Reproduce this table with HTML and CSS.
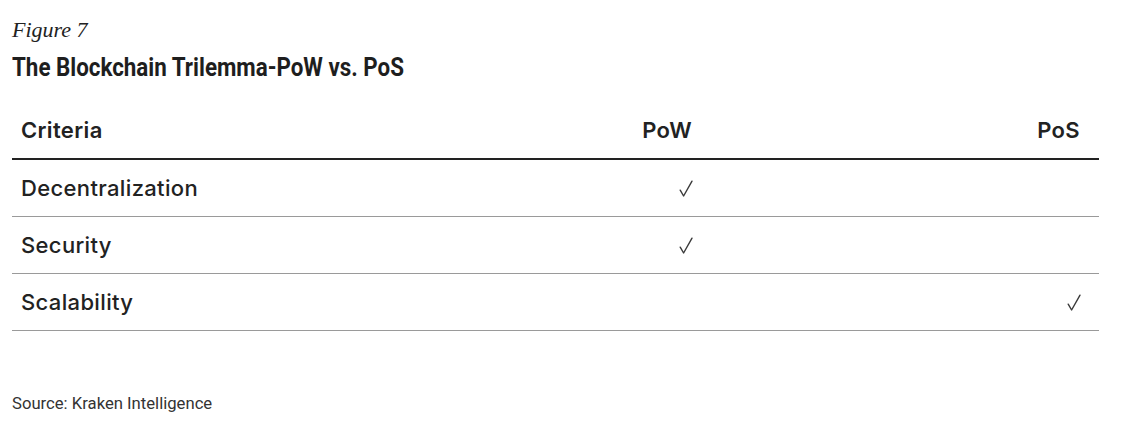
FILE: index.html
```html
<!DOCTYPE html>
<html>
<head>
<meta charset="utf-8">
<link rel="stylesheet" href="styles.css">
</head>
<body>
<div class="figure">
  <div class="fig-label">Figure 7</div>
  <h1 class="fig-title"><span class="cond">The Blockchain Trilemma-PoW vs. PoS</span></h1>
  <table class="trilemma">
    <colgroup>
      <col class="c-crit">
      <col class="c-pow">
      <col class="c-pos">
    </colgroup>
    <thead>
      <tr><th class="left">Criteria</th><th>PoW</th><th>PoS</th></tr>
    </thead>
    <tbody>
      <tr><td class="left">Decentralization</td><td class="chk"><svg class="tick" viewBox="0 0 14 17" width="14" height="17" aria-label="✓"><path d="M1.2 10.2 L4.6 16 L13 1.2"/></svg></td><td class="chk"></td></tr>
      <tr><td class="left">Security</td><td class="chk"><svg class="tick" viewBox="0 0 14 17" width="14" height="17" aria-label="✓"><path d="M1.2 10.2 L4.6 16 L13 1.2"/></svg></td><td class="chk"></td></tr>
      <tr><td class="left">Scalability</td><td class="chk"></td><td class="chk"><svg class="tick" viewBox="0 0 14 17" width="14" height="17" aria-label="✓"><path d="M1.2 10.2 L4.6 16 L13 1.2"/></svg></td></tr>
    </tbody>
  </table>
  <div class="source"><span class="cond">Source: Kraken Intelligence</span></div>
</div>
</body>
</html>
```
FILE: styles.css
```css
html, body { margin: 0; padding: 0; background: #fff; }
.figure { padding: 16px 0 0 12px; width: 1087px; }
.fig-label {
  font-family: "Liberation Serif", serif;
  font-style: italic;
  font-size: 22px;
  line-height: 28px;
  color: #222;
}
.cond {
  display: inline-block;
  transform-origin: left center;
  white-space: nowrap;
}
.fig-title {
  margin: 8px 0 0 0;
  font-family: "Roboto", sans-serif;
  font-weight: bold;
  font-size: 26px;
  line-height: 30px;
  color: #1e1e1e;
}
.fig-title .cond { transform: scaleX(0.86); }
.trilemma {
  margin-top: 20px;
  width: 1087px;
  border-collapse: collapse;
  font-family: "Inter", "Noto Sans", sans-serif;
  font-size: 22px;
  color: #222;
}
.c-crit { width: 440px; }
.c-pow { width: 259px; }
.c-pos { width: 388px; }
.trilemma th, .trilemma td {
  padding: 0 19px 0 9px;
  text-align: right;
  height: 56px;
  letter-spacing: 0.35px;
}
.trilemma th { font-weight: 600; border-bottom: 2px solid #222; }
.trilemma td { font-weight: 500; border-bottom: 1px solid #9a9a9a; }
.trilemma .left { text-align: left; }
.trilemma td.chk {
  padding-right: 18px;
  line-height: 0;
}
.tick {
  display: inline-block;
  vertical-align: middle;
}
.tick path {
  fill: none;
  stroke: #3a3a3a;
  stroke-width: 1.4;
  stroke-linecap: round;
  stroke-linejoin: round;
}
.source {
  margin-top: 62px;
  font-family: "Roboto", sans-serif;
  font-size: 17px;
  color: #333;
}
.source .cond { transform: scaleX(0.98); }
```
